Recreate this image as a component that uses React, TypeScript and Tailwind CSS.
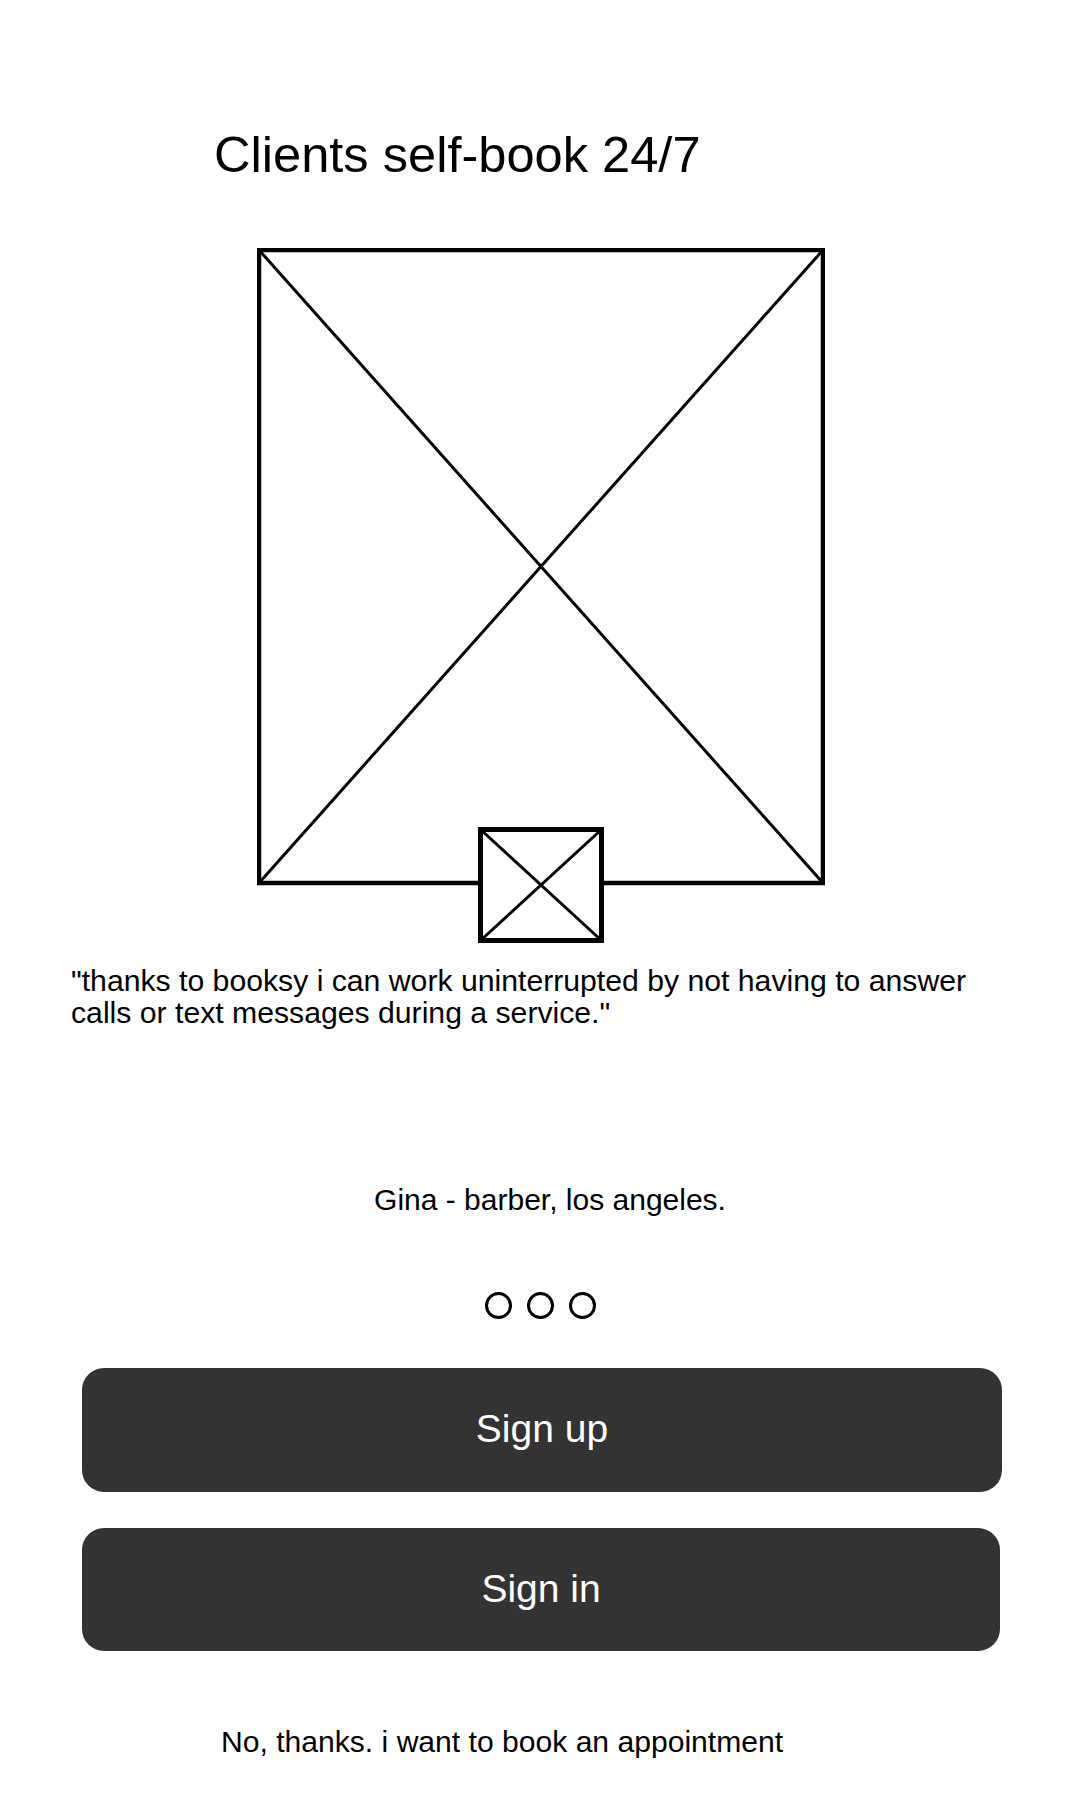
export default function App() {
  return (
    <div className="h-[1800px] w-[1080px] bg-white text-black font-['Liberation_Sans',Arial,sans-serif]">
      {/* Title */}
      <div className="pt-[130px] pl-[214px]">
        <h1 className="text-[50.6px] leading-none font-normal">Clients self-book 24/7</h1>
      </div>

      {/* Image placeholder */}
      <div className="mt-[67px] ml-[257px] w-[568px]">
        <svg width="568" height="695" viewBox="0 0 568 695" fill="none">
          <rect x="2" y="2" width="564" height="633" stroke="#000" strokeWidth="4.5" />
          <line x1="2" y1="2" x2="566" y2="635" stroke="#000" strokeWidth="3" />
          <line x1="566" y1="2" x2="2" y2="635" stroke="#000" strokeWidth="3" />
          <rect x="223.5" y="581.5" width="121" height="111" fill="#fff" stroke="#000" strokeWidth="5" />
          <line x1="223.5" y1="581.5" x2="344.5" y2="692.5" stroke="#000" strokeWidth="3" />
          <line x1="344.5" y1="581.5" x2="223.5" y2="692.5" stroke="#000" strokeWidth="3" />
        </svg>
      </div>

      {/* Quote */}
      <p className="mt-[22px] pl-[71px] w-[1000px] text-[30.2px] leading-[32px]">
        "thanks to booksy i can work uninterrupted by not having to answer calls or text messages during a service."
      </p>

      <p className="mt-[154px] pl-5 text-center text-[30px] leading-[33px]">Gina - barber, los angeles.</p>

      {/* Pager dots */}
      <div className="mt-[76px] flex justify-center gap-[15px]">
        <span className="w-[27px] h-[27px] rounded-full border-[3px] border-black" />
        <span className="w-[27px] h-[27px] rounded-full border-[3px] border-black" />
        <span className="w-[27px] h-[27px] rounded-full border-[3px] border-black" />
      </div>

      {/* Actions */}
      <div className="mt-[49px] pl-[82px] flex flex-col gap-[36px]">
        <button className="w-[920px] h-[124px] rounded-[22px] bg-[#333333] text-white text-[39px]">
          Sign up
        </button>
        <button className="w-[918px] h-[123px] rounded-[22px] bg-[#333333] text-white text-[39px]">
          Sign in
        </button>
      </div>

      <p className="mt-[74px] pl-[221px] text-[30.1px] leading-[33px]">No, thanks. i want to book an appointment</p>
    </div>
  );
}
